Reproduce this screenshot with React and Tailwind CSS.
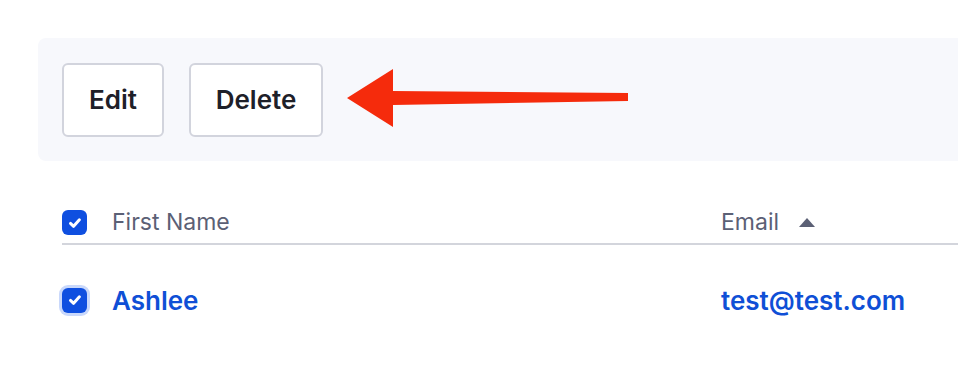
import React from 'react';

function Check({ ring }) {
    return (
        <span className={`flex items-center justify-center w-[25px] h-[25px] rounded-[6px] bg-[#0f4fe0] ${ring ? 'ring-[3px] ring-[#c9d8fb]' : ''}`}>
            <svg width="18" height="18" viewBox="0 0 18 18" fill="none">
                <path d="M4.5 9.4 L7.6 12.3 L13.4 5.8" stroke="white" strokeWidth="3" strokeLinecap="round" strokeLinejoin="round" />
            </svg>
        </span>
    );
}

export default function App() {
    return (
        <div className="w-[958px] h-[382px] overflow-hidden bg-white" style={{ fontFamily: 'Inter, "Open Sans", sans-serif' }}>
            <div className="ml-[38px] mt-[38px] w-[940px] h-[123px] rounded-lg bg-[#f7f8fc] p-6 flex items-center gap-[25px]">
                <button className="w-[102px] h-[74px] rounded-md border-2 border-[#d2d4dd] bg-white text-[26px] font-semibold text-[#1e2029]">Edit</button>
                <button className="w-[134px] h-[74px] rounded-md border-2 border-[#d2d4dd] bg-white text-[26px] font-semibold text-[#1e2029]">Delete</button>
                <svg width="290" height="64" viewBox="0 0 290 64" className="-ml-[3px] mt-[2px]">
                    <path d="M2 29 L48 0 L48 22 L283 24 L283 32 L48 36 L48 58 Z" fill="#f52b0c" />
                </svg>
            </div>
            <div className="ml-[62px] mt-[44px]">
                <div className="flex items-center h-[40px] border-b-2 border-[#d3d5dc]">
                    <div className="w-[50px] pb-[3px]"><Check /></div>
                    <div className="w-[609px] text-[23px] text-[#5b6075] pb-[3px]">First Name</div>
                    <div className="flex items-center text-[23px] text-[#5b6075] pb-[3px]">
                        Email
                        <svg width="16" height="9" viewBox="0 0 16 9" className="ml-[20px]">
                            <path d="M0 9 L8 0 L16 9 Z" fill="#5b6075" />
                        </svg>
                    </div>
                </div>
                <div className="flex items-center h-[110px]">
                    <div className="w-[50px]"><Check ring /></div>
                    <div className="w-[609px] text-[26px] font-semibold text-[#0f4fd6]">Ashlee</div>
                    <div className="text-[26px] font-semibold text-[#0f4fd6]">test@test.com</div>
                </div>
            </div>
        </div>
    );
}
